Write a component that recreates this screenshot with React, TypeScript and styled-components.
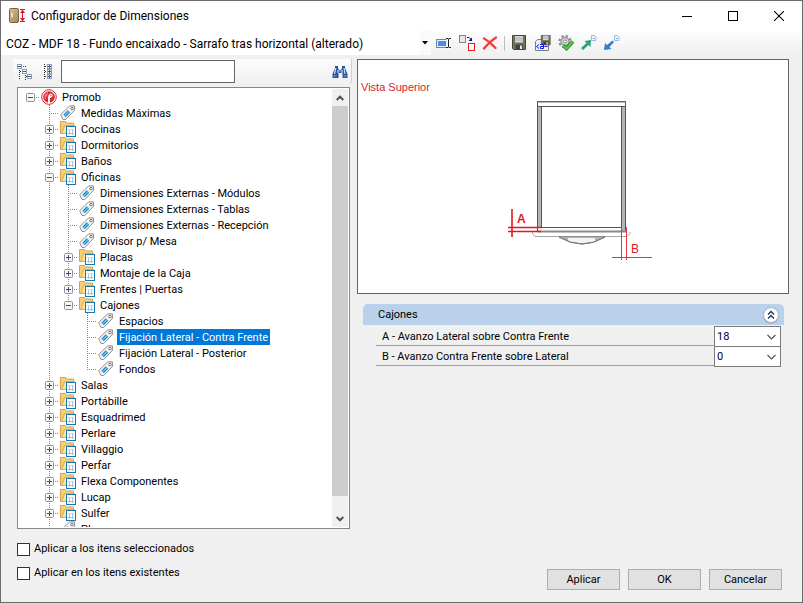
import React, { useState } from "react";
import styled, { createGlobalStyle } from "styled-components";

const GlobalStyle = createGlobalStyle`
  *, *::before, *::after { box-sizing: border-box; }
  body { margin: 0; background: #f0f0f0; }
  button, input, select { font: inherit; color: inherit; }
  svg { display: block; flex: none; }
`;

const uiFont = `Roboto, "Liberation Sans", sans-serif`;

const Window = styled.div`
  display: flex;
  flex-direction: column;
  height: 100vh;
  border: 1px solid #6b6a6c;
  background: #f0f0f0;
  color: #000;
  font: 11px/16px ${uiFont};
`;

const TitleBar = styled.header`
  display: flex;
  align-items: center;
  height: 30px;
  flex: none;
  padding-left: 8px;
  background: #fff;
  font: 12px/16px ${uiFont};
`;

const Title = styled.h1`
  flex: 1;
  margin: 0 0 0 5px;
  font: inherit;
`;

const CaptionButton = styled.button`
  display: grid;
  place-items: center;
  width: 46px;
  height: 28px;
  padding: 0;
  border: 0;
  background: none;
`;

const ToolRow = styled.div`
  display: flex;
  flex: none;
  height: 24px;
`;

const Overlaid = styled.div`
  display: grid;
  align-items: center;
  & > * { grid-area: 1 / 1; }
  & > svg { justify-self: end; pointer-events: none; }
`;

const ProfileField = styled(Overlaid)`
  width: 430px;
  padding-right: 3px;
  background: linear-gradient(90deg, #fff 419px, #fafafa 419px);
`;

const ProfileSelect = styled.select`
  appearance: none;
  width: 100%;
  height: 24px;
  padding: 2px 0 0 5px;
  border: 0;
  background: none;
  font: 12px/16px ${uiFont};
`;

const ToolStrip = styled.div`
  display: flex;
  flex: 1;
  align-items: center;
  padding-left: 1px;
  border-radius: 0 0 3px 0;
  background: linear-gradient(#fdfdfd, #f0f0f0);
`;

const ToolButton = styled.button`
  width: 23px;
  padding: 0 3px 0 4px;
  border: 0;
  background: none;
`;

const Separator = styled.span`
  width: 1px;
  height: 15px;
  margin: 0 3px;
  background: #bdbdbd;
`;

const Body = styled.main`
  display: flex;
  flex: 1;
  min-height: 0;
  gap: 5px;
  padding: 4px 13px 12px 12px;
`;

const LeftPane = styled.section`
  display: flex;
  flex-direction: column;
  width: 339px;
  flex: none;
  padding-bottom: 1px;
`;

const SearchBar = styled.form`
  display: flex;
  flex: none;
  align-items: center;
  height: 25px;
  border-right: 1px solid #d0d0d0;
  border-radius: 0 0 3px 0;
  background: linear-gradient(#fcfcfc, #f0f0f0);
`;

const SearchInput = styled.input`
  width: 174px;
  height: 23px;
  margin: 0 auto 0 2px;
  padding: 0 4px;
  border: 1px solid #646464;
  background: #fff;
  outline: none;
`;

const TreeFrame = styled.div`
  display: flex;
  flex: 1;
  min-height: 0;
  margin: 3px 2px 12px 4px;
  padding: 1px;
  border: 1px solid #828790;
  background: #fff;
`;

const TreeRows = styled.ul`
  flex: 1;
  margin: 0;
  padding: 0 0 0 2px;
  overflow: hidden;
  list-style: none;
`;

const TreeRow = styled.li`
  display: flex;
  height: 16px;
`;

type Rail = "none" | "through" | "end" | "pass" | "root";

const dotsDown = "repeating-linear-gradient(#8a8a8a 0 1px, transparent 1px 2px)";
const dotsAcross = "repeating-linear-gradient(90deg, #8a8a8a 0 1px, transparent 1px 2px)";
const railBackground: Record<Rail, string> = {
  none: "none",
  pass: `${dotsDown} 9px 0 / 1px 16px no-repeat`,
  through: `${dotsDown} 9px 0 / 1px 16px no-repeat, ${dotsAcross} 9px 8px / 10px 1px no-repeat`,
  end: `${dotsDown} 9px 0 / 1px 8px no-repeat, ${dotsAcross} 9px 8px / 10px 1px no-repeat`,
  root: `${dotsAcross} 9px 8px / 10px 1px no-repeat`,
};

const Slot = styled.span<{ $rail: Rail }>`
  display: grid;
  place-items: center;
  flex: none;
  width: 19px;
  height: 16px;
  padding-top: 1px;
  background: ${(p) => railBackground[p.$rail]};
`;

const Expander = styled.button`
  width: 9px;
  height: 9px;
  padding: 0;
  border: 0;
  background: none;
`;

const NodeIcon = styled.span`
  width: 20px;
  flex: none;
  padding-left: 1px;
`;

const NodeLabel = styled.span<{ $selected: boolean }>`
  height: 16px;
  padding: 1px 2px 0;
  white-space: nowrap;
  color: ${(p) => (p.$selected ? "#fff" : "#000")};
  background: ${(p) => (p.$selected ? "#0078d7" : "transparent")};
`;

const ScrollTrack = styled.div`
  display: flex;
  flex-direction: column;
  width: 16px;
  flex: none;
  background: #f0f0f0;
`;

const ScrollButton = styled.button`
  display: grid;
  place-items: center;
  height: 17px;
  flex: none;
  padding: 0;
  border: 0;
  background: none;
`;

const ScrollThumb = styled.div`
  flex: 1;
  margin: 0 0 14px;
  background: #cdcdcd;
`;

const CheckLabel = styled.label`
  display: flex;
  align-items: center;
  gap: 4px;
  margin: 0 0 8px 4px;
`;

const CheckBox = styled.input`
  appearance: none;
  width: 13px;
  height: 13px;
  margin: 0;
  border: 1px solid #333;
  background: #fff;
  &:checked { box-shadow: inset 0 0 0 2px #fff; background: #333; }
`;

const RightPane = styled.section`
  display: flex;
  flex: 1;
  flex-direction: column;
  min-width: 0;
`;

const Preview = styled.figure`
  display: flex;
  flex-direction: column;
  align-items: center;
  gap: 2px;
  margin: 0;
  padding: 20px 3px 27px;
  border: 1px solid #646464;
  background: #fff;
`;

const PreviewCaption = styled.figcaption`
  align-self: stretch;
  color: #d2262c;
  font: 11px/14px "Liberation Sans", Arial, sans-serif;
`;

const Group = styled.section`
  margin: 10px 5px 0 6px;
`;

const GroupHeader = styled.header`
  display: flex;
  align-items: center;
  justify-content: space-between;
  height: 21px;
  padding: 0 4px 0 15px;
  border-radius: 5px 5px 0 0;
  background: #b9d1ea;
`;

const GroupTitle = styled.h2`
  margin: 0;
  font: inherit;
`;

const CollapseButton = styled.button`
  padding: 0;
  border: 0;
  background: none;
`;

const FieldRow = styled.div`
  display: flex;
  height: 20px;
  margin: 0 3px 0 13px;
  border-bottom: 1px solid #a0a0a0;
`;

const FieldLabel = styled.label`
  flex: 1;
  padding-left: 6px;
  line-height: 22px;
`;

const ValueField = styled(Overlaid)`
  width: 67px;
  height: 21px;
  padding-right: 4px;
  border: 1px solid #7a7a7a;
  background: #fff;
`;

const ValueSelect = styled.select`
  appearance: none;
  width: 100%;
  height: 18px;
  padding: 0 0 0 2px;
  border: 0;
  background: none;
  color: #00003c;
`;

const Fields = styled.div`
  padding-top: 1px;
`;

const Actions = styled.footer`
  display: flex;
  justify-content: flex-end;
  gap: 8px;
  margin: auto 7px 0 0;
`;

const ActionButton = styled.button`
  width: 73px;
  height: 21px;
  padding: 0;
  border: 1px solid #adadad;
  background: #e1e1e1;
`;

const AppIcon = () => (
  <svg width="17" height="16" viewBox="0 0 17 16">
    <defs>
      <linearGradient id="wood" x1="0" y1="0" x2="1" y2="1">
        <stop offset="0" stopColor="#dbc29b" /><stop offset="1" stopColor="#a5824f" />
      </linearGradient>
    </defs>
    <rect x=".5" y=".5" width="9" height="14" rx="1" fill="url(#wood)" stroke="#76603f" />
    <path d="M3 5v4" stroke="#f6efdf" strokeWidth="1.4" />
    <path d="M11 1.5h5M11 13.5h5M13.5 2v11" stroke="#e2122f" />
    <path d="M11 5l2.5-3.5L16 5zM11 10l2.5 3.5L16 10z" fill="#e2122f" />
  </svg>
);

const DropArrow = () => (
  <svg width="6" height="4" viewBox="0 0 6 4"><path d="M0 0h6L3 3.5z" fill="#000" /></svg>
);

const Chevron = ({ up = false }: { up?: boolean }) => (
  <svg width="9" height="6" viewBox="0 0 9 6" fill="none" stroke="#505050" strokeWidth="1.1">
    <path d={up ? "M.5 5l4-4 4 4" : "M.5 1l4 4 4-4"} />
  </svg>
);

const ScrollArrow = ({ up = false }: { up?: boolean }) => (
  <svg width="8" height="6" viewBox="0 0 8 6" fill="none" stroke="#505050" strokeWidth="2">
    <path d={up ? "M.7 5L4 1.7 7.3 5" : "M.7 1L4 4.3 7.3 1"} />
  </svg>
);

const RenameIcon = () => (
  <svg width="16" height="16" viewBox="0 0 16 16">
    <rect x=".5" y="4.500" width="12" height="8" fill="#e6eefb" stroke="#6f84a8" />
    <rect x="2" y="6" width="8" height="5" fill="#4a8bea" />
    <path d="M10.500 3.500h4M10.500 12.500h4M12.500 4v8" stroke="#fff" strokeWidth="3" />
    <path d="M10 3.500h2l.5.5.5-.5h2M10 12.500h2l.5-.5.5.5h2M12.500 4v8" fill="none" stroke="#222" />
  </svg>
);

const ReplaceIcon = () => (
  <svg width="17" height="16" viewBox="0 0 17 16" fill="none">
    <rect x=".5" y=".5" width="6" height="7" fill="#e8e8e8" stroke="#8b8080" />
    <rect x="9.500" y="8.500" width="6" height="7" fill="#fff" stroke="#f01818" />
    <path d="M8 2.500h2l2 2" stroke="#101080" /><path d="M13 2.500V6H9.500z" fill="#101080" />
  </svg>
);

const DeleteIcon = () => (
  <svg width="16" height="16" viewBox="0 0 16 16" fill="none">
    <path d="M2 3.500C5 5 10 9.500 13.500 13M14 2.500C9 5.500 5 9.500 2 13.500" stroke="#f23c3c" strokeWidth="2.300" strokeLinecap="round" />
  </svg>
);

const Floppy = () => (
  <g>
    <path d="M.5.5h13v14h-12l-1-1z" fill="#77735b" stroke="#46443b" />
    <path d="M3 1h8v6.500H3z" fill="#d5d8dc" />
    <path d="M3 3h8M3 5h8" stroke="#a9adb2" />
    <path d="M3.500 9.500h7.500v5H3.500z" fill="#414141" />
    <path d="M8 10.500h2v3.500H8z" fill="#e9e9e9" />
  </g>
);

const SaveIcon = () => <svg width="16" height="16" viewBox="0 0 16 16"><Floppy /></svg>;

const SaveAsIcon = () => (
  <svg width="16" height="16" viewBox="0 0 16 16">
    <path d="M.5 15.500v-9l2-2h11v11z" fill="#eef0f8" stroke="#777d90" />
    <g transform="translate(6 0) scale(.68)"><Floppy /></g>
    <path d="M4 9.500L1.500 11.500 4 13.500M9.500 11.500h3" fill="none" stroke="#1220d8" />
    <path d="M5 9.500h3.500v4H5.500v-2h3" fill="none" stroke="#1220d8" />
  </svg>
);

const GearCheckIcon = () => (
  <svg width="17" height="16" viewBox="0 0 17 16">
    <circle cx="7" cy="6.500" r="5.600" fill="none" stroke="#8f9292" strokeWidth="2.200" strokeDasharray="2.400 2" />
    <circle cx="7" cy="6.500" r="4" fill="#d5d7d7" stroke="#969999" strokeWidth="1.500" />
    <circle cx="7" cy="6.500" r="1.500" fill="#fff" stroke="#888" />
    <path d="M5 10.500l3.500 3 6.500-7" fill="none" stroke="#24812a" strokeWidth="3.600" />
    <path d="M5 10.500l3.500 3 6.500-7" fill="none" stroke="#55cc42" strokeWidth="2" />
  </svg>
);

const TransferIcon = ({ out = false }: { out?: boolean }) => (
  <svg width="16" height="16" viewBox="0 0 16 16">
    <path d="M10.500.5h3l1.500 1.500v3.500h-4.500z" fill="#eaf2fc" stroke="#9bbbe3" /><path d="M12 3.500h1.500" stroke="#6d9cd8" />
    {out ? (
      <path d="M0 15l1-7 2 2 5.500-4.500L10 7l-4.500 5 2 2z" fill="#3a7bcb" />
    ) : (
      <path d="M10 5l-6.500 1 2 2L0 13l2 2 5.500-5 2 2z" fill="#2fa27b" />
    )}
  </svg>
);

const OutlineNodes = ({ nodes, plus = false }: { nodes: number[][]; plus?: boolean }) => (
  <g>
    {nodes.map(([x, y]) => (
      <g key={`${x}-${y}`}>
        <rect x={x + 0.5} y={y + 0.5} width="4" height="4" fill="#fff" stroke="#8c9cb4" />
        <path d={`M${x + 1} ${y + 2.5}h3${plus ? `M${x + 2.5} ${y + 1}v3` : ""}`} stroke="#3a5380" />
      </g>
    ))}
  </g>
);

const CollapseAllIcon = () => (
  <svg width="16" height="16" viewBox="0 0 16 16" fill="none">
    <path d="M2.500 6v9M3 7.500h3M8.500 11v5M9 12.500h2" stroke="#333" strokeDasharray="1 1" />
    <path d="M6 2.500h3" stroke="#444" strokeDasharray="1 1" />
    <OutlineNodes nodes={[[0, 0], [5, 5], [10, 10]]} />
  </svg>
);

const ExpandAllIcon = () => (
  <svg width="16" height="16" viewBox="0 0 16 16" fill="none">
    <path d="M4.500 0v16M5 2.500h2M5 7.500h2M5 12.500h2" stroke="#333" strokeDasharray="1 1" />
    <OutlineNodes plus nodes={[[7, 0], [7, 5], [7, 10]]} />
  </svg>
);

const BinocularsIcon = () => (
  <svg width="16" height="14" viewBox="0 0 16 14">
    <path d="M3 1h3v2l1 2h2l1-2V1h3v2l2.500 6v4h-5V8h-4v5h-6V9L3 3z" fill="#27549b" />
    <path d="M3.800 3L2.500 9M12 3l1 6M6 5v3M10 5v3" stroke="#c9dcf5" strokeWidth="1.200" />
    <path d="M1.500 11h3M11.500 11h3M7 6h2" stroke="#86a9da" />
  </svg>
);

const LogoIcon = () => (
  <svg width="17" height="16" viewBox="0 0 17 16">
    <circle cx="8" cy="8" r="7.300" fill="#fff" stroke="#dc2433" />
    <circle cx="8" cy="8" r="5.800" fill="#dc2433" />
    <path d="M7 14.500V9.800c0-3 .8-5.300 3-5.300 2 0 2.500 3 .4 3.800C9 8.800 8.800 9.800 8.800 11v3.500z" fill="#fff" />
    <path d="M9.200 7.500c0-1.200.3-1.800.9-1.800.7 0 .8 1.200-.9 1.800z" fill="#dc2433" />
    <path d="M4.800 4.500C3.800 6 3.800 8 4.800 10M6.500 3.500C5.800 5 5.600 6 5.800 7.500" stroke="#f3a1a8" fill="none" />
  </svg>
);

const FolderIcon = () => (
  <svg width="17" height="16" viewBox="0 0 17 16">
    <path d="M.5 12.500v-12h5l1 1.500h7v10.500z" fill="#f7cf78" stroke="#d9a04c" />
    <path d="M2 12.500L4.500 4.500h10v8z" fill="#fbe3a0" stroke="#dfaa50" />
    <rect x="6.500" y="5.500" width="9" height="10" fill="#fff" stroke="#1579b4" />
    <path d="M9.500 8v6M12.500 8v6M8 12.500h6" stroke="#9cc6e6" />
    <path d="M8 8.500h6" stroke="#ecd491" />
  </svg>
);

const TagIcon = () => (
  <svg width="17" height="16" viewBox="0 0 17 16">
    <path d="M.7 9.500L9.500 1l4.800-.3.5 4.300-9 9.500H3z" fill="#f5f5f5" stroke="#8f8f8f" />
    <path d="M3.200 9.700l4.500-4.500 2.600 2.600-4.500 4.500z" fill="#2b95d3" />
    <path d="M4.500 11l4.500-4.500" stroke="#8bd0f4" />
    <circle cx="12" cy="3.500" r="1.300" fill="#fff" stroke="#707070" />
  </svg>
);

const ExpanderGlyph = ({ open }: { open: boolean }) => (
  <svg width="9" height="9" viewBox="0 0 9 9">
    <rect x=".5" y=".5" width="8" height="8" rx="1" fill="#f7f7f7" stroke="#919191" />
    <path d={open ? "M2 4.500h5" : "M2 4.500h5M4.500 2v5"} stroke="#34508f" />
  </svg>
);

const CollapseIcon = () => (
  <svg width="18" height="18" viewBox="0 0 18 18" fill="none">
    <circle cx="9" cy="9.500" r="8" fill="#8e9caf" />
    <circle cx="9" cy="9" r="7.500" fill="#fff" stroke="#aab6c7" />
    <path d="M6 8.500l3-3 3 3M6 12.500l3-3 3 3" stroke="#222e68" strokeWidth="1.400" />
  </svg>
);

const DrawerPlan = () => (
  <svg width="160" height="170" viewBox="493 96 160 170" fill="none" role="img" aria-label="Vista superior del cajón">
    <path d="M532.500 232v1.500l2.500 3h92l3-3V232" stroke="#a5a5a5" />
    <path d="M559 237q23 14 46 0z" fill="#f3f3f3" stroke="#777" />
    <path d="M559 237q4 3 9 4v-4zM605 237q-4 3-10 4v-4z" fill="#b0b0b0" />
    <path d="M559 237q23 14 46 0" stroke="#777" />
    <rect x="537.500" y="106.500" width="4" height="125" fill="#b4b4b4" stroke="#555" />
    <rect x="621.500" y="106.500" width="4" height="125" fill="#b4b4b4" stroke="#555" />
    <rect x="537.500" y="101.500" width="88" height="5" fill="#fff" stroke="#555" />
    <path d="M537 102h89" stroke="#777" />
    <rect x="537.500" y="227.500" width="84" height="4" fill="#fff" stroke="#555" />
    <path d="M538 231.500h88" stroke="#888" strokeWidth="2" />
    <path d="M512 209v28M508 227.500h34M508 231.500h33" stroke="#e01a22" strokeWidth="1.600" />
    <path d="M621.500 227v33M626.500 227v33M612 257.500h40" stroke="#e23840" />
    <text x="517" y="223" fill="#e01a22" fontFamily="Liberation Sans, sans-serif" fontSize="12" fontWeight="700">A</text>
    <text x="631" y="253" fill="#e01a22" fontFamily="Liberation Sans, sans-serif" fontSize="12">B</text>
  </svg>
);

interface TreeNode {
  name: string;
  kind: "root" | "folder" | "tag";
  children?: TreeNode[];
}

const folder = (name: string, children?: TreeNode[]): TreeNode => ({ name, kind: "folder", children });
const tag = (name: string): TreeNode => ({ name, kind: "tag" });

const tree: TreeNode = {
  name: "Promob",
  kind: "root",
  children: [
    tag("Medidas Máximas"),
    folder("Cocinas"),
    folder("Dormitorios"),
    folder("Baños"),
    folder("Oficinas", [
      tag("Dimensiones Externas - Módulos"),
      tag("Dimensiones Externas - Tablas"),
      tag("Dimensiones Externas - Recepción"),
      tag("Divisor p/ Mesa"),
      folder("Placas"),
      folder("Montaje de la Caja"),
      folder("Frentes | Puertas"),
      folder("Cajones", [
        tag("Espacios"),
        tag("Fijación Lateral - Contra Frente"),
        tag("Fijación Lateral - Posterior"),
        tag("Fondos"),
      ]),
    ]),
    folder("Salas"),
    folder("Portábille"),
    folder("Esquadrimed"),
    folder("Perlare"),
    folder("Villaggio"),
    folder("Perfar"),
    folder("Flexa Componentes"),
    folder("Lucap"),
    folder("Sulfer"),
    tag("Plus"),
  ],
};

const nodeIcons = { root: LogoIcon, folder: FolderIcon, tag: TagIcon };

interface BranchProps {
  node: TreeNode;
  rails: Rail[];
  last: boolean;
  selected: string;
  onSelect: (name: string) => void;
}

const Branch = ({ node, rails, last, selected, onSelect }: BranchProps) => {
  const Icon = nodeIcons[node.kind];
  const own: Rail = node.kind === "root" ? "root" : last ? "end" : "through";
  const below: Rail[] = [...rails, last ? "none" : "pass"];
  return (
    <>
      <TreeRow role="treeitem" aria-level={rails.length + 1} aria-selected={selected === node.name}>
        {rails.map((rail, i) => <Slot key={i} $rail={rail} />)}
        <Slot $rail={own}>
          {node.kind !== "tag" && (
            <Expander type="button" aria-label={node.name}><ExpanderGlyph open={!!node.children} /></Expander>
          )}
        </Slot>
        <NodeIcon><Icon /></NodeIcon>
        <NodeLabel $selected={selected === node.name} onClick={() => onSelect(node.name)}>{node.name}</NodeLabel>
      </TreeRow>
      {node.children?.map((child, i, all) => (
        <Branch key={child.name} node={child} rails={below} last={i === all.length - 1} selected={selected} onSelect={onSelect} />
      ))}
    </>
  );
};

const tools = [
  { label: "Renombrar", icon: <RenameIcon /> },
  { label: "Reemplazar", icon: <ReplaceIcon /> },
  { label: "Eliminar", icon: <DeleteIcon /> },
  null,
  { label: "Guardar", icon: <SaveIcon /> },
  { label: "Guardar como", icon: <SaveAsIcon /> },
  { label: "Validar", icon: <GearCheckIcon /> },
  { label: "Importar", icon: <TransferIcon /> },
  { label: "Exportar", icon: <TransferIcon out /> },
];

const fields = [
  { id: "avanzo-a", label: "A - Avanzo Lateral sobre Contra Frente", value: "18" },
  { id: "avanzo-b", label: "B - Avanzo Contra Frente sobre Lateral", value: "0" },
];

export default function App() {
  const [selected, setSelected] = useState("Fijación Lateral - Contra Frente");
  return (
    <>
      <GlobalStyle />
      <Window>
        <TitleBar>
          <AppIcon />
          <Title>Configurador de Dimensiones</Title>
          <CaptionButton aria-label="Minimizar">
            <svg width="10" height="10" viewBox="0 0 10 10"><path d="M0 5.500h10" stroke="#000" /></svg>
          </CaptionButton>
          <CaptionButton aria-label="Maximizar">
            <svg width="10" height="10" viewBox="0 0 10 10"><rect x=".5" y=".5" width="9" height="9" fill="none" stroke="#000" /></svg>
          </CaptionButton>
          <CaptionButton aria-label="Cerrar">
            <svg width="10" height="10" viewBox="0 0 10 10"><path d="M0 0l10 10M10 0L0 10" stroke="#000" strokeWidth="1.100" /></svg>
          </CaptionButton>
        </TitleBar>
        <ToolRow>
          <ProfileField>
            <ProfileSelect aria-label="Configuración">
              <option>COZ - MDF 18 - Fundo encaixado - Sarrafo tras horizontal (alterado)</option>
            </ProfileSelect>
            <DropArrow />
          </ProfileField>
          <ToolStrip role="toolbar">
            {tools.map((tool, i) =>
              tool ? (
                <ToolButton key={tool.label} type="button" aria-label={tool.label}>{tool.icon}</ToolButton>
              ) : (
                <Separator key={i} />
              )
            )}
          </ToolStrip>
        </ToolRow>
        <Body>
          <LeftPane>
            <SearchBar onSubmit={(e) => e.preventDefault()}>
              <ToolButton type="button" aria-label="Contraer todo"><CollapseAllIcon /></ToolButton>
              <ToolButton type="button" aria-label="Expandir todo"><ExpandAllIcon /></ToolButton>
              <SearchInput type="text" aria-label="Buscar" />
              <ToolButton type="submit" aria-label="Buscar"><BinocularsIcon /></ToolButton>
            </SearchBar>
            <TreeFrame>
              <TreeRows role="tree">
                <Branch node={tree} rails={[]} last selected={selected} onSelect={setSelected} />
              </TreeRows>
              <ScrollTrack>
                <ScrollButton type="button" aria-label="Subir"><ScrollArrow up /></ScrollButton>
                <ScrollThumb />
                <ScrollButton type="button" aria-label="Bajar"><ScrollArrow /></ScrollButton>
              </ScrollTrack>
            </TreeFrame>
            <CheckLabel><CheckBox type="checkbox" />Aplicar a los itens seleccionados</CheckLabel>
            <CheckLabel><CheckBox type="checkbox" />Aplicar en los itens existentes</CheckLabel>
          </LeftPane>
          <RightPane>
            <Preview>
              <PreviewCaption>Vista Superior</PreviewCaption>
              <DrawerPlan />
            </Preview>
            <Group>
              <GroupHeader>
                <GroupTitle>Cajones</GroupTitle>
                <CollapseButton type="button" aria-label="Contraer"><CollapseIcon /></CollapseButton>
              </GroupHeader>
              <Fields>
                {fields.map((f) => (
                  <FieldRow key={f.id}>
                    <FieldLabel htmlFor={f.id}>{f.label}</FieldLabel>
                    <ValueField>
                      <ValueSelect id={f.id} defaultValue={f.value}><option>{f.value}</option></ValueSelect>
                      <Chevron />
                    </ValueField>
                  </FieldRow>
                ))}
              </Fields>
            </Group>
            <Actions>
              <ActionButton type="button">Aplicar</ActionButton>
              <ActionButton type="button">OK</ActionButton>
              <ActionButton type="button">Cancelar</ActionButton>
            </Actions>
          </RightPane>
        </Body>
      </Window>
    </>
  );
}
